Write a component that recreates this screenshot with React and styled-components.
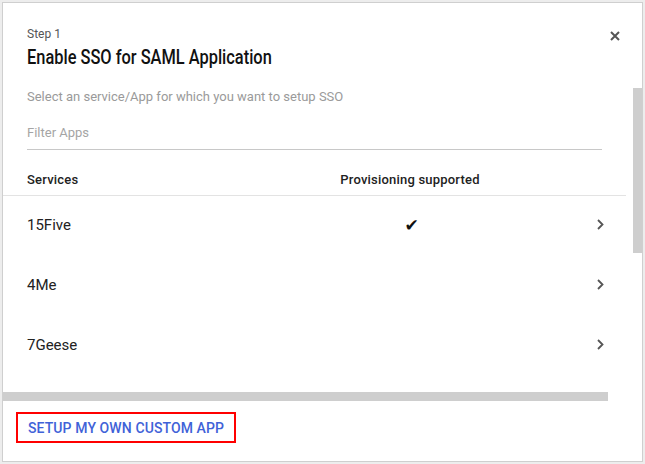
import styled, { createGlobalStyle } from "styled-components";

const GlobalStyle = createGlobalStyle`
  html, body {
    margin: 0;
    padding: 0;
    background: #ededed;
    font-family: Roboto, "Liberation Sans", sans-serif;
  }
`;

const services = [
  { name: "15Five", provisioning: true },
  { name: "4Me", provisioning: false },
  { name: "7Geese", provisioning: false },
];

function App() {
  return (
    <>
      <GlobalStyle />
      <Page>
        <Dialog>
          <Header>
            <Titles>
              <Step>Step 1</Step>
              <Title>Enable SSO for SAML Application</Title>
            </Titles>
            <CloseButton aria-label="Close">
              <svg width="10" height="10" viewBox="0 0 10 10">
                <path d="M1 1L9 9M9 1L1 9" stroke="#555" strokeWidth="2" />
              </svg>
            </CloseButton>
          </Header>
          <Body>
            <Viewport>
              <Hint>Select an service/App for which you want to setup SSO</Hint>
              <Filter placeholder="Filter Apps" />
              <Table>
                <HeadRow>
                  <span>Services</span>
                  <Center>Provisioning supported</Center>
                  <span />
                </HeadRow>
                {services.map((s) => (
                  <Row key={s.name}>
                    <span>{s.name}</span>
                    <Center>{s.provisioning && <Check>✔</Check>}</Center>
                    <Chevron>
                      <svg width="7" height="11" viewBox="0 0 7 11">
                        <path d="M1 1L5.5 5.5L1 10" fill="none" stroke="#555" strokeWidth="1.8" />
                      </svg>
                    </Chevron>
                  </Row>
                ))}
              </Table>
            </Viewport>
            <Track $vertical>
              <Thumb $vertical />
            </Track>
            <Track>
              <Thumb />
            </Track>
            <span />
          </Body>
          <Footer>
            <CustomButton>Setup my own custom app</CustomButton>
          </Footer>
        </Dialog>
      </Page>
    </>
  );
}

export default App;

const Page = styled.div`
  padding: 2px;
`;
const Dialog = styled.div`
  width: 639px;
  height: 458px;
  background: #fff;
  border: 1px solid #cfcfcf;
  display: flex;
  flex-direction: column;
`;
const Header = styled.div`
  height: 85px;
  box-sizing: border-box;
  padding: 24px 22px 0 24px;
  display: flex;
  justify-content: space-between;
  align-items: flex-start;
`;
const Titles = styled.div`
  display: flex;
  flex-direction: column;
  align-items: flex-start;
  gap: 3px;
`;
const Step = styled.div`
  font-size: 12px;
  line-height: 14px;
  color: #555;
`;
const Title = styled.h1`
  margin: 0;
  font-size: 20px;
  line-height: 26px;
  font-weight: 500;
  color: #111;
  transform: scaleX(0.82);
  transform-origin: left center;
`;
const CloseButton = styled.button`
  border: 0;
  background: none;
  padding: 0;
  margin-top: 4px;
  display: flex;
`;
const Body = styled.div`
  display: grid;
  grid-template-columns: 630px 9px;
  grid-template-rows: 304px 9px;
`;
const Viewport = styled.div`
  overflow: hidden;
  padding-left: 24px;
`;
const Track = styled.div`
  background: #fff;
  display: flex;
  flex-direction: ${(p) => (p.$vertical ? "column" : "row")};
`;
const Thumb = styled.div`
  background: #cecece;
  width: ${(p) => (p.$vertical ? "100%" : "605px")};
  height: ${(p) => (p.$vertical ? "165px" : "100%")};
`;
const Hint = styled.div`
  font-size: 13px;
  line-height: 18px;
  color: #9a9a9a;
`;
const Filter = styled.input`
  display: block;
  margin-top: 14px;
  width: 575px;
  height: 30px;
  box-sizing: border-box;
  border: 0;
  border-bottom: 1px solid #c8c8c8;
  padding: 0 0 4px;
  font-family: inherit;
  font-size: 13px;
  outline: none;
  &::placeholder {
    color: #a5a5a5;
  }
`;
const Table = styled.div`
  width: 623px;
  margin-left: -24px;
`;
const HeadRow = styled.div`
  display: grid;
  grid-template-columns: 303px 160px 1fr;
  height: 46px;
  box-sizing: border-box;
  padding: 14px 0 0 24px;
  align-items: center;
  border-bottom: 1px solid #e3e3e3;
  font-size: 13px;
  font-weight: 500;
  letter-spacing: 0.2px;
  color: #222;
`;
const Row = styled.div`
  display: grid;
  grid-template-columns: 303px 160px 1fr;
  height: 60px;
  box-sizing: border-box;
  padding: 0 22px 3px 24px;
  align-items: center;
  font-size: 15px;
  color: #222;
`;
const Center = styled.span`
  text-align: center;
`;
const Check = styled.span`
  display: inline-block;
  margin-left: 3px;
  font-family: "DejaVu Sans", sans-serif;
  font-size: 17px;
  line-height: 20px;
  color: #111;
`;
const Chevron = styled.span`
  justify-self: end;
  display: flex;
`;
const Footer = styled.div`
  flex: 1;
  padding: 11px 13px;
`;
const CustomButton = styled.button`
  height: 31px;
  box-sizing: border-box;
  border: 2px solid #f00;
  background: #fff;
  padding: 0 10px;
  font-family: Roboto, "Liberation Sans", sans-serif;
  font-size: 14px;
  font-weight: 500;
  letter-spacing: 0.1px;
  text-transform: uppercase;
  color: #3f62d8;
`;
